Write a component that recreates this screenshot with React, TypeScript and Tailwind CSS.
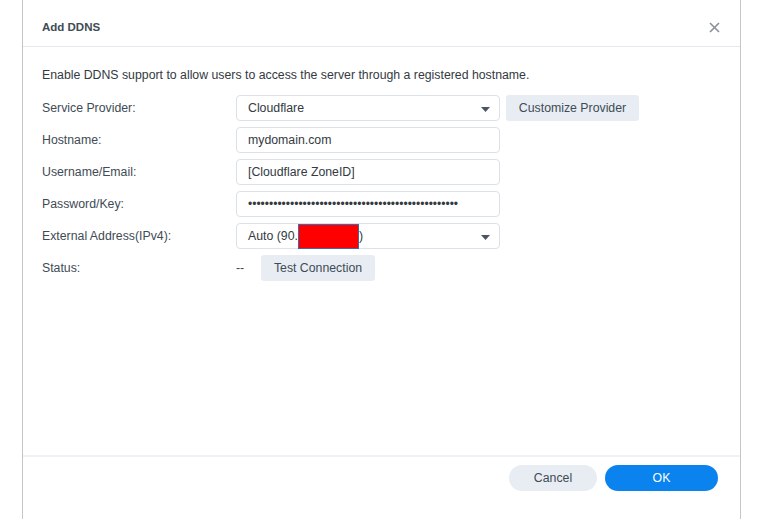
import React from "react";

const font = { fontFamily: '"Liberation Sans", Arial, sans-serif' };

function Caret() {
  return (
    <svg width="9" height="5" viewBox="0 0 9 5" className="absolute right-[9px] top-[11px]">
      <path d="M0 0h9L4.5 5z" fill="#4a5563" />
    </svg>
  );
}

function Row({ label, children }: { label: string; children: React.ReactNode }) {
  return (
    <div className="flex items-center h-[26px]">
      <div className="w-[194px] shrink-0 text-[12.3px] text-[#414b55]">{label}</div>
      <div className="flex items-center gap-[6px]">{children}</div>
    </div>
  );
}

function Field({ value, select, children }: { value?: string; select?: boolean; children?: React.ReactNode }) {
  return (
    <div className="relative w-[264px] h-[26px] rounded-[4px] border border-[#dde2e8] bg-white flex items-center pl-[11px] text-[12.3px] text-[#333a42]">
      {children ?? value}
      {select && <Caret />}
    </div>
  );
}

function GrayButton({ label, w }: { label: string; w: string }) {
  return (
    <button className={`h-[26px] ${w} rounded-[3px] bg-[#e8edf3] text-[12.3px] text-[#414b55]`}>{label}</button>
  );
}

export default function App() {
  return (
    <div className="w-[760px] h-[519px] bg-white overflow-hidden" style={font}>
      <div className="ml-[22px] w-[719px] h-full border-x border-[#c6c6c6] flex flex-col">
        <div className="h-[47px] shrink-0 border-b border-[#e5e9ef] flex items-center justify-between pl-[19px] pr-[20px]">
          <span className="text-[11.5px] font-bold text-[#414b55] mt-[10px]">Add DDNS</span>
          <svg width="11" height="11" viewBox="0 0 11 11" className="mt-[9px]">
            <path d="M1 1l9 9M10 1l-9 9" stroke="#8a9098" strokeWidth="1.6" />
          </svg>
        </div>
        <div className="flex-1 pl-[19px] pt-[20px]">
          <p className="text-[12.3px] leading-[16px] text-[#333a42]">
            Enable DDNS support to allow users to access the server through a registered hostname.
          </p>
          <div className="mt-[12px] flex flex-col gap-[6px]">
            <Row label="Service Provider:">
              <Field value="Cloudflare" select />
              <GrayButton label="Customize Provider" w="w-[133px]" />
            </Row>
            <Row label="Hostname:">
              <Field value="mydomain.com" />
            </Row>
            <Row label="Username/Email:">
              <Field value="[Cloudflare ZoneID]" />
            </Row>
            <Row label="Password/Key:">
              <Field>
                <span className="text-[12px] leading-none">{"•".repeat(50)}</span>
              </Field>
            </Row>
            <Row label="External Address(IPv4):">
              <Field select>
                <span>Auto (90.</span>
                <span className="inline-block w-[61px] h-[25px] bg-[#ff0000] border border-[#4466aa]" />
                <span>)</span>
              </Field>
            </Row>
            <Row label="Status:">
              <span className="text-[12.3px] text-[#414b55] w-[19px]">--</span>
              <GrayButton label="Test Connection" w="w-[114px]" />
            </Row>
          </div>
        </div>
        <div className="h-[64px] shrink-0 border-t-2 border-[#eef1f5] flex justify-end gap-[8px] pt-[8px] pr-[22px]">
          <button className="w-[88px] h-[26px] rounded-full bg-[#e8edf3] text-[12.3px] text-[#414b55]">Cancel</button>
          <button className="w-[113px] h-[26px] rounded-full bg-[#0a83ee] text-[12.3px] text-white">OK</button>
        </div>
      </div>
    </div>
  );
}
